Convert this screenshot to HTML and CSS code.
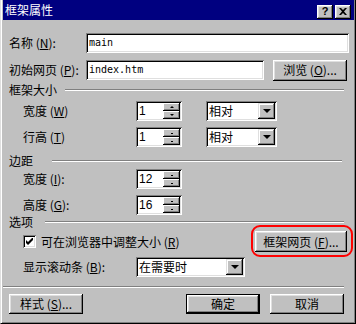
FILE: index.html
```html
<!DOCTYPE html>
<html lang="zh-CN">

<head>
  <meta charset="UTF-8">
  <meta name="viewport" content="width=device-width, initial-scale=1.0">
  <title>框架属性</title>
  <link rel="stylesheet" href="styles.css">
</head>

<body>
  <div class="window">
    <div class="titlebar">
      <span class="title">框架属性</span>
      <div class="title-buttons">
        <span class="tbtn tbtn-help">?</span>
        <span class="tbtn">
          <svg width="8" height="7" viewBox="0 0 8 7"><path d="M0 0h2l2 2 2-2h2L5 3.5 8 7H6L4 5 2 7H0l3-3.5z" fill="#000"/></svg>
        </span>
      </div>
    </div>

    <div class="content">
      <div class="row row-name">
        <span class="lbl">名称 (<u>N</u>):</span>
        <div class="field mono field-name">main</div>
      </div>

      <div class="row row-url">
        <span class="lbl">初始网页 (<u>P</u>):</span>
        <div class="field mono field-url">index.htm</div>
        <span class="btn btn-browse">浏览 (<u>O</u>)...</span>
      </div>

      <div class="group grp-size">
        <span>框架大小</span>
        <div class="etch"></div>
      </div>

      <div class="row sub row-w">
        <span class="lbl-sub">宽度 (<u>W</u>)</span>
        <div class="spin">
          <span class="spin-val">1</span>
          <div class="spin-btns">
            <span class="sbtn"><i class="up"></i></span>
            <span class="sbtn"><i class="down"></i></span>
          </div>
        </div>
        <div class="combo combo-unit">
          <span class="combo-val">相对</span>
          <span class="combo-btn"><i class="down big"></i></span>
        </div>
      </div>

      <div class="row sub row-h">
        <span class="lbl-sub">行高 (<u>T</u>)</span>
        <div class="spin">
          <span class="spin-val">1</span>
          <div class="spin-btns">
            <span class="sbtn"><i class="dot"></i></span>
            <span class="sbtn"><i class="dot"></i></span>
          </div>
        </div>
        <div class="combo combo-unit">
          <span class="combo-val">相对</span>
          <span class="combo-btn"><i class="down big"></i></span>
        </div>
      </div>

      <div class="group grp-margin">
        <span>边距</span>
        <div class="etch"></div>
      </div>

      <div class="row sub row-mw">
        <span class="lbl-sub">宽度 (<u>I</u>):</span>
        <div class="spin">
          <span class="spin-val">12</span>
          <div class="spin-btns">
            <span class="sbtn"><i class="dot"></i></span>
            <span class="sbtn"><i class="dot"></i></span>
          </div>
        </div>
      </div>

      <div class="row sub row-mh">
        <span class="lbl-sub">高度 (<u>G</u>):</span>
        <div class="spin">
          <span class="spin-val">16</span>
          <div class="spin-btns">
            <span class="sbtn"><i class="dot"></i></span>
            <span class="sbtn"><i class="dot"></i></span>
          </div>
        </div>
      </div>

      <div class="group grp-options">
        <span>选项</span>
        <div class="etch"></div>
      </div>

      <div class="row sub row-check">
        <span class="check">
          <svg width="7" height="7" viewBox="0 0 7 7"><path d="M0 2v3l2 2 5-5V-1L2 4z" fill="#000"/></svg>
        </span>
        <span class="check-text">可在浏览器中调整大小 (<u>R</u>)</span>
        <span class="marked">
          <span class="btn btn-frame">框架网页 (<u>F</u>)...</span>
        </span>
      </div>

      <div class="row sub row-scroll">
        <span class="lbl-sub">显示滚动条 (<u>B</u>):</span>
        <div class="combo combo-scroll">
          <span class="combo-val">在需要时</span>
          <span class="combo-btn"><i class="down big"></i></span>
        </div>
      </div>

      <div class="separator"></div>

      <div class="row row-actions">
        <span class="btn btn-action">样式 (<u>S</u>)...</span>
        <span class="btn btn-action btn-default btn-ok">确定</span>
        <span class="btn btn-action btn-cancel">取消</span>
      </div>
    </div>
  </div>
</body>

</html>
```

FILE: styles.css
```css
body {
  margin: 0;
  background-color: #c0c0c0;
  font-family: "Noto Sans CJK SC", sans-serif;
  font-size: 12px;
  line-height: 14px;
  color: #000;
}

u {
  text-decoration: underline;
  text-underline-offset: 1px;
}

.window {
  width: 356px;
  height: 324px;
  box-sizing: border-box;
  background-color: #c0c0c0;
  border-left: 1px solid #dfdfdf;
  border-right: 1px solid #000;
  border-bottom: 1px solid #000;
  box-shadow: inset 1px 0 #fff, inset -1px -1px #808080;
  padding: 0 1px 1px 2px;
}

/* title bar */

.titlebar {
  height: 20px;
  background-color: #000080;
  color: #fff;
  display: flex;
  align-items: center;
  justify-content: space-between;
  padding: 0 3px 0 2px;
}

.title {
  font-size: 12px;
}

.title-buttons {
  display: flex;
  gap: 2px;
  margin-top: 3px;
}

.tbtn {
  width: 16px;
  height: 14px;
  box-sizing: border-box;
  background-color: #c0c0c0;
  box-shadow: inset -1px -1px #000, inset 1px 1px #fff, inset -2px -2px #808080, inset 2px 2px #dfdfdf;
  display: flex;
  align-items: center;
  justify-content: center;
  color: #000;
}

.tbtn-help {
  font-family: "Liberation Sans", sans-serif;
  font-weight: bold;
  font-size: 11px;
  line-height: 11px;
}

/* body of the dialog */

.content {
  padding: 0 0 0 6px;
}

.row {
  display: flex;
  align-items: center;
  height: 20px;
}

.row > * {
  flex-shrink: 0;
}

.sub {
  padding-left: 14px;
}

.lbl {
  width: 77px;
}

.lbl-sub {
  width: 113px;
}

.row-name { margin-top: 13px; }
.row-url { margin-top: 7px; }
.row-w { margin-top: 5px; }
.row-h { margin-top: 6px; }
.row-mw { margin-top: 2px; }
.row-mh { margin-top: 6px; }
.row-check { margin-top: 3px; height: 21px; }
.row-scroll { margin-top: 5px; }
.row-actions { margin-top: 6px; }

.field {
  height: 20px;
  box-sizing: border-box;
  background-color: #fff;
  box-shadow: inset 1px 1px #808080, inset -1px -1px #fff, inset 2px 2px #000, inset -2px -2px #dfdfdf;
  padding: 0 3px;
  display: flex;
  align-items: center;
}

.mono {
  font-family: "DejaVu Sans Mono", monospace;
  font-size: 10px;
}

.field-name { width: 263px; }
.field-url { width: 178px; }

.btn {
  height: 20px;
  box-sizing: border-box;
  background-color: #c0c0c0;
  box-shadow: inset -1px -1px #000, inset 1px 1px #fff, inset -2px -2px #808080, inset 2px 2px #dfdfdf;
  display: flex;
  align-items: center;
  justify-content: center;
}

.btn-browse {
  width: 74px;
  margin-left: 9px;
  height: 21px;
}

/* group headers */

.group {
  display: flex;
  align-items: center;
  height: 12px;
  width: 335px;
}

.etch {
  flex: 1;
  height: 0;
  border-top: 1px solid #808080;
  border-bottom: 1px solid #fff;
}

.grp-size { margin-top: 4px; }
.grp-size .etch { margin-left: 8px; }

.grp-margin { margin-top: 8px; width: 333px; }
.grp-margin .etch { margin-left: 19px; }

.grp-options { margin-top: 1px; }
.grp-options .etch { margin-left: 12px; }

/* spinners */

.spin {
  width: 46px;
  height: 20px;
  box-sizing: border-box;
  background-color: #fff;
  box-shadow: inset 1px 1px #808080, inset -1px -1px #fff, inset 2px 2px #000, inset -2px -2px #dfdfdf;
  padding: 2px;
  display: flex;
}

.spin-val {
  flex: 1;
  padding-left: 1px;
  font-family: "Liberation Sans", sans-serif;
  font-size: 12px;
  line-height: 16px;
}

.spin-btns {
  width: 17px;
  display: flex;
  flex-direction: column;
}

.sbtn {
  flex: 1;
  background-color: #c0c0c0;
  box-shadow: inset -1px -1px #000, inset 1px 1px #fff, inset -2px -2px #808080;
  display: flex;
  align-items: center;
  justify-content: center;
}

.up {
  width: 0;
  height: 0;
  border-left: 2px solid transparent;
  border-right: 2px solid transparent;
  border-bottom: 2px solid #000;
}

.down {
  width: 0;
  height: 0;
  border-left: 2px solid transparent;
  border-right: 2px solid transparent;
  border-top: 2px solid #000;
}

.down.big {
  border-left-width: 4px;
  border-right-width: 4px;
  border-top-width: 4px;
}

.dot {
  width: 2px;
  height: 1px;
  background-color: #000;
}

/* combo boxes */

.combo {
  height: 20px;
  box-sizing: border-box;
  background-color: #fff;
  box-shadow: inset 1px 1px #808080, inset -1px -1px #fff, inset 2px 2px #000, inset -2px -2px #dfdfdf;
  padding: 2px;
  display: flex;
}

.combo-val {
  flex: 1;
  padding-left: 1px;
  line-height: 16px;
}

.combo-btn {
  width: 17px;
  background-color: #c0c0c0;
  box-shadow: inset -1px -1px #000, inset 1px 1px #dfdfdf, inset -2px -2px #808080, inset 2px 2px #fff;
  display: flex;
  align-items: center;
  justify-content: center;
}

.combo-unit {
  width: 71px;
  margin-left: 24px;
}

.combo-scroll {
  width: 109px;
}

/* check row */

.check {
  width: 13px;
  height: 13px;
  box-sizing: border-box;
  background-color: #fff;
  box-shadow: inset 1px 1px #808080, inset -1px -1px #fff, inset 2px 2px #000, inset -2px -2px #dfdfdf;
  display: flex;
  align-items: center;
  justify-content: center;
}

.check-text {
  margin-left: 5px;
}

.marked {
  position: relative;
  margin-left: auto;
  margin-right: 7px;
}

.marked::after {
  content: "";
  position: absolute;
  left: -4px;
  right: -6px;
  top: -6px;
  bottom: -5px;
  border: 2px solid #f00;
  border-radius: 9px;
}

.btn-frame {
  width: 92px;
  height: 21px;
}

/* footer */

.separator {
  margin: 9px 0 0 -6px;
  width: 341px;
  border-top: 1px solid #808080;
  border-bottom: 1px solid #fff;
}

.btn-action {
  width: 74px;
}

.btn-default {
  border: 1px solid #000;
}

.btn-ok {
  margin-left: 103px;
}

.btn-cancel {
  margin-left: 10px;
}
```
